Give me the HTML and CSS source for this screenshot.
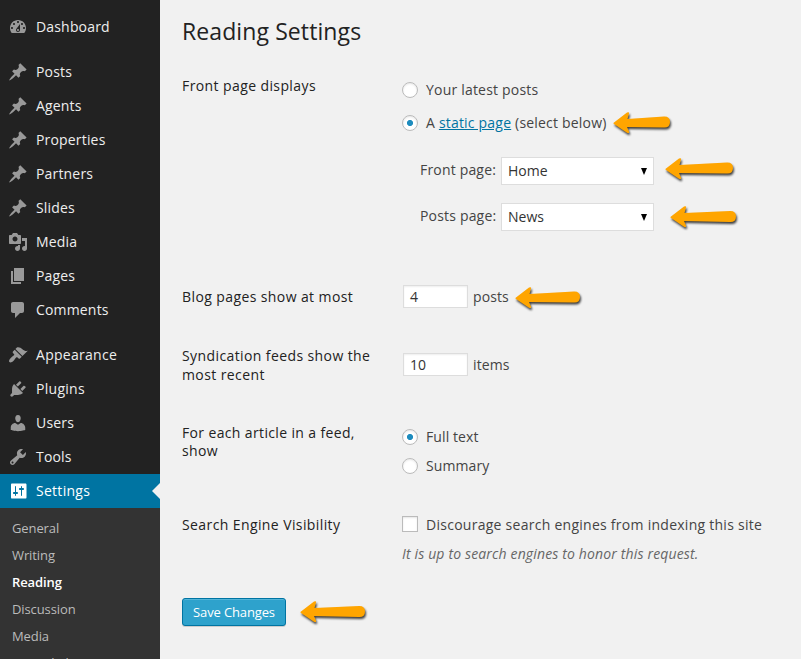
FILE: index.html
```html
<!DOCTYPE html>
<html lang="en">
<head>
<meta charset="utf-8">
<title>Reading Settings</title>
<link rel="stylesheet" href="styles.css">
</head>
<body>
<svg class="defs" width="0" height="0">
  <symbol id="pin" viewBox="0 0 20 20"><path d="M10.44 3.02l1.82-1.82 6.36 6.35-1.83 1.82c-1.05-.68-2.48-.57-3.41.36l-.75.75c-.92.93-1.04 2.35-.35 3.41l-1.83 1.82-2.41-2.41-2.8 2.79c-.42.42-3.38 2.71-3.8 2.29s1.86-3.39 2.28-3.81l2.79-2.79L4.1 9.36l1.83-1.82c1.05.69 2.48.57 3.4-.36l.75-.75c.93-.92 1.05-2.35.36-3.41z"/></symbol>
</svg>
<div class="app">
  <nav class="sidebar">
    <ul class="menu">
      <li class="item"><svg class="icon" viewBox="0 0 20 20"><path fill-rule="evenodd" d="M3.76 16h12.48c1.1-1.37 1.76-3.11 1.76-5 0-4.42-3.58-8-8-8s-8 3.58-8 8c0 1.89.66 3.63 1.76 5zM10 4c.55 0 1 .45 1 1s-.45 1-1 1-1-.45-1-1 .45-1 1-1zM6 6c.55 0 1 .45 1 1s-.45 1-1 1-1-.45-1-1 .45-1 1-1zm8 0c.55 0 1 .45 1 1s-.45 1-1 1-1-.45-1-1 .45-1 1-1zm-5.37 5.55L12 7v6c0 1.1-.9 2-2 2s-2-.9-2-2c0-.57.24-1.08.63-1.45zM4 10c.55 0 1 .45 1 1s-.45 1-1 1-1-.45-1-1 .45-1 1-1zm12 0c.55 0 1 .45 1 1s-.45 1-1 1-1-.45-1-1 .45-1 1-1zm-5 3c0-.55-.45-1-1-1s-1 .45-1 1 .45 1 1 1 1-.45 1-1z"/></svg><span>Dashboard</span></li>
      <li class="separator"></li>
      <li class="item"><svg class="icon"><use href="#pin"/></svg><span>Posts</span></li>
      <li class="item"><svg class="icon"><use href="#pin"/></svg><span>Agents</span></li>
      <li class="item"><svg class="icon"><use href="#pin"/></svg><span>Properties</span></li>
      <li class="item"><svg class="icon"><use href="#pin"/></svg><span>Partners</span></li>
      <li class="item"><svg class="icon"><use href="#pin"/></svg><span>Slides</span></li>
      <li class="item"><svg class="icon" viewBox="0 0 20 20"><path fill-rule="evenodd" d="M13 11V4c0-.55-.45-1-1-1h-1.67L9 1H5L3.67 3H2c-.55 0-1 .45-1 1v7c0 .55.45 1 1 1h10c.55 0 1-.45 1-1zM7 4.5c1.38 0 2.5 1.12 2.5 2.5S8.38 9.5 7 9.5 4.5 8.38 4.5 7 5.62 4.5 7 4.5zM14 6h5v10.5c0 1.38-1.12 2.5-2.5 2.5S14 17.88 14 16.5s1.12-2.5 2.5-2.5c.17 0 .34.02.5.05V9h-3V6zm-4 8.05V13h2v3.5c0 1.38-1.12 2.5-2.5 2.5S7 17.88 7 16.5 8.12 14 9.5 14c.17 0 .34.02.5.05z"/></svg><span>Media</span></li>
      <li class="item"><svg class="icon" viewBox="0 0 20 20"><path d="M6 15V2h10v13H6zm-1 1h8v2H3V5h2v11z"/></svg><span>Pages</span></li>
      <li class="item"><svg class="icon" viewBox="0 0 20 20"><path d="M5 2h9c1.1 0 2 .9 2 2v7c0 1.1-.9 2-2 2h-2l-5 5v-5H5c-1.1 0-2-.9-2-2V4c0-1.1.9-2 2-2z"/></svg><span>Comments</span></li>
      <li class="separator"></li>
      <li class="item"><svg class="icon" viewBox="0 0 20 20"><path d="M14.48 11.06L7.41 3.99l1.5-1.5c.5-.56 2.3-.47 3.51.32 1.21.8 1.43 1.28 2.91 2.1 1.18.64 2.45 1.26 4.45.85zm-.71.71L6.7 4.7 4.93 6.47c-.39.39-.39 1.02 0 1.41l1.06 1.06c.39.39.39 1.03 0 1.42-.6.6-1.43 1.11-2.21 1.69-.35.26-.7.53-1.01.84C1.43 14.23.4 16.08 1.4 17.07c.99 1 2.84-.03 4.18-1.36.31-.31.58-.66.85-1.02.57-.78 1.08-1.61 1.69-2.21.39-.39 1.02-.39 1.41 0l1.06 1.06c.39.39 1.02.39 1.41 0z"/></svg><span class="wide">Appearance</span></li>
      <li class="item"><svg class="icon" viewBox="0 0 20 20"><path d="M13.11 4.36L9.87 7.6 8 5.73l3.24-3.24c.35-.34 1.05-.2 1.56.32.52.51.66 1.21.31 1.55zm-8 1.77l.91-1.12 9.01 9.01-1.19.84c-.71.71-2.63 1.16-3.82 1.16H6.14L4.9 17.26c-.59.59-1.54.59-2.12 0-.59-.58-.59-1.53 0-2.12l1.24-1.24v-3.88c0-1.13.4-3.19 1.09-3.89zm7.26 3.97l3.24-3.24c.34-.35 1.04-.21 1.55.31.52.51.66 1.21.31 1.55l-3.24 3.25z"/></svg><span class="wide">Plugins</span></li>
      <li class="item"><svg class="icon" viewBox="0 0 20 20"><path d="M10 9.25c-2.27 0-2.73-3.44-2.73-3.44C7 4.02 7.82 2 9.97 2c2.16 0 2.98 2.02 2.71 3.81 0 0-.41 3.44-2.68 3.44zm0 2.57L12.72 10c2.39 0 4.52 2.33 4.52 4.53v2.49s-3.65 1.13-7.24 1.13c-3.65 0-7.24-1.13-7.24-1.13v-2.49c0-2.25 1.94-4.48 4.47-4.48z"/></svg><span>Users</span></li>
      <li class="item"><svg class="icon" viewBox="0 0 20 20"><path fill-rule="evenodd" d="M16.68 9.77c-1.34 1.34-3.3 1.67-4.95.99l-5.41 6.52c-.99.99-2.59.99-3.58 0s-.99-2.59 0-3.57l6.52-5.42c-.68-1.65-.35-3.61.99-4.95 1.28-1.28 3.12-1.62 4.72-1.06l-2.89 2.89 2.82 2.82 2.86-2.87c.53 1.58.18 3.39-1.08 4.65zM3.81 16.21c.4.39 1.04.39 1.43 0 .4-.4.4-1.04 0-1.43-.39-.4-1.03-.4-1.43 0-.39.39-.39 1.03 0 1.43z"/></svg><span>Tools</span></li>
      <li class="item current"><svg class="icon" viewBox="0 0 20 20"><path fill-rule="evenodd" d="M18.500 16V4c0-1-.2-1.500-1-1.500H4c-.8 0-1 .5-1 1.500v12c0 1 .2 1.500 1 1.500h13.500c.8 0 1-.5 1-1.500zM8 11h1c.55 0 1 .45 1 1s-.45 1-1 1H8v1.500c0 .28-.22.5-.5.5s-.5-.22-.5-.5V13H6c-.55 0-1-.45-1-1s.45-1 1-1h1V5.500c0-.28.22-.5.5-.5s.5.22.5.5V11zm5-2h-1c-.55 0-1-.45-1-1s.45-1 1-1h1V5.500c0-.28.22-.5.5-.5s.5.22.5.5V7h1c.55 0 1 .45 1 1s-.45 1-1 1h-1v5.500c0 .28-.22.5-.5.5s-.5-.22-.5-.5V9z"/></svg><span class="wide">Settings</span></li>
    </ul>
    <ul class="submenu">
      <li>General</li>
      <li>Writing</li>
      <li class="active">Reading</li>
      <li>Discussion</li>
      <li>Media</li>
      <li>Permalinks</li>
    </ul>
  </nav>
  <main class="content">
    <h1>Reading Settings</h1>
    <section class="row row-front">
      <div class="label">Front page displays</div>
      <div class="field">
        <label class="option"><i class="radio"></i><span>Your latest posts</span></label>
        <label class="option second"><i class="radio on"></i><span>A <a>static page</a> (select below)</span>
          <svg class="arrow a1" width="66" height="30"><path d="M1 10.500L14 .6q2.500-1 2 1L14.500 7 51 4.500q6-.2 6 5.500t-6 5.500L14 15l2 4.500q.5 2.300-2 1.300L1 12q-1-.8 0-1.500z"/></svg></label>
        <div class="pick first"><span>Front page:</span><div class="select"><span>Home</span><b></b></div>
          <svg class="arrow a2" width="77" height="30"><path d="M1 10.500L14 .6q2.500-1 2 1L14.500 7 62 4.500q6-.2 6 5.500t-6 5.500L14 15l2 4.500q.5 2.300-2 1.300L1 12q-1-.8 0-1.500z"/></svg></div>
        <div class="pick"><span>Posts page:</span><div class="select"><span>News</span><b></b></div>
          <svg class="arrow a3" width="75" height="30"><path d="M1 10.500L14 .6q2.500-1 2 1L14.500 7 60 5q6-.2 6 5.500t-6 5.500L14 15l2 4.500q.5 2.300-2 1.300L1 12q-1-.8 0-1.500z"/></svg></div>
      </div>
    </section>
    <section class="row row-blog">
      <div class="label">Blog pages show at most</div>
      <div class="field number"><div class="input">4</div><span>posts</span>
        <svg class="arrow a4" width="74" height="30"><path d="M1 10.500L14 .6q2.500-1 2 1L14.500 7 59 4.500q6-.2 6 5.500t-6 5.500L14 15l2 4.500q.5 2.300-2 1.300L1 12q-1-.8 0-1.500z"/></svg></div>
    </section>
    <section class="row row-feeds">
      <div class="label">Syndication feeds show the<br>most recent</div>
      <div class="field number"><div class="input">10</div><span>items</span></div>
    </section>
    <section class="row row-article">
      <div class="label">For each article in a feed,<br>show</div>
      <div class="field">
        <label class="option"><i class="radio on"></i><span class="tight">Full text</span></label>
        <label class="option"><i class="radio"></i><span class="tight">Summary</span></label>
      </div>
    </section>
    <section class="row row-search">
      <div class="label">Search Engine Visibility</div>
      <div class="field">
        <label class="option"><i class="checkbox"></i><span class="wide">Discourage search engines from indexing this site</span></label>
        <p class="description">It is up to search engines to honor this request.</p>
      </div>
    </section>
    <div class="submit"><button class="save">Save Changes</button>
      <svg class="arrow a5" width="74" height="30"><path d="M1 10.500L14 .6q2.500-1 2 1L14.500 7 59 5q6-.2 6 5.500t-6 5.500L14 15l2 4.500q.5 2.300-2 1.300L1 12q-1-.8 0-1.500z"/></svg></div>
  </main>
</div>
</body>
</html>
```
FILE: styles.css
```css
* { box-sizing: border-box; }
html, body { height: 100%; }
body {
  margin: 0;
  overflow: hidden;
  background: #f1f1f1;
  color: #444;
  font: 14px/18px "Open Sans", sans-serif;
}
ul { margin: 0; padding: 0; list-style: none; }
.defs { display: block; }
.app { display: flex; height: 659px; overflow: hidden; }

.sidebar { flex: none; width: 160px; background: #222; overflow: hidden; }
.menu { padding-top: 10px; }
.item {
  display: flex;
  align-items: center;
  height: 34px;
  padding-left: 8px;
  color: #eee;
  letter-spacing: .17px;
}
.item span { margin-left: 8px; }
.item .wide { letter-spacing: .28px; }
.icon { width: 20px; height: 20px; fill: #999; flex: none; }
.separator { height: 11px; }
.current { position: relative; background: #0074a2; color: #fff; }
.current .icon { fill: #fff; }
.current::after {
  content: "";
  position: absolute;
  right: 0;
  top: 9px;
  border: 8px solid transparent;
  border-left: 0;
  border-right-color: #f1f1f1;
}
.submenu { padding-top: 7px; background: #333; font-size: 13px; letter-spacing: -.1px; }
.submenu li { height: 27px; padding-left: 12px; line-height: 27px; color: #bbb; }
.submenu .active { color: #fff; font-weight: 600; }

.content { flex: 1; min-width: 0; padding-left: 22px; }
h1 {
  height: 77px;
  margin: 0;
  padding-top: 16px;
  font-size: 23px;
  line-height: 30px;
  font-weight: 400;
  letter-spacing: .1px;
  color: #222;
}
.row { display: grid; grid-template-columns: 220px 1fr; }
.row-front { height: 211px; }
.row-blog { height: 59px; }
.row-feeds { height: 77px; }
.row-article { height: 92px; }
.row-search { height: 82px; }
.label { color: #222; line-height: 18.5px; letter-spacing: .4px; white-space: nowrap; }
.row-article .label { line-height: 18px; letter-spacing: .36px; }
.row-front .field, .row-article .field { padding-top: 4px; }
.option {
  display: flex;
  align-items: center;
  gap: 8px;
  height: 18px;
  position: relative;
  white-space: nowrap;
  letter-spacing: .2px;
}
.option .tight { letter-spacing: .1px; }
.option .wide { letter-spacing: .265px; }
.option.second { margin-top: 15px; }
.row-article .option + .option { margin-top: 11px; }
.radio, .checkbox {
  width: 16px;
  height: 16px;
  flex: none;
  border: 1px solid #bbb;
  background: #fff;
  box-shadow: inset 0 1px 2px rgba(0, 0, 0, .1);
}
.checkbox { margin-top: -2px; }
.radio { border-radius: 50%; }
.radio.on { background: radial-gradient(circle at center, #1e8cbe 2.7px, #fff 3.4px); }
a { color: #0074a2; text-decoration: underline; }
.pick { display: flex; align-items: center; width: 252px; height: 28px; margin-top: 18px; padding-left: 18px; position: relative; }
.pick > span { width: 81px; margin-top: -2px; letter-spacing: .18px; white-space: nowrap; }
.pick.first { margin-top: 25px; }
.select {
  display: flex;
  align-items: center;
  justify-content: space-between;
  width: 153px;
  height: 28px;
  padding: 0 6px;
  border: 1px solid #ddd;
  background: #fff;
  color: #333;
}
.select b { border: 3.5px solid transparent; border-top: 7px solid #000; border-bottom: 0; }
.number { display: flex; align-items: center; height: 23px; padding-left: 1px; gap: 5px; position: relative; letter-spacing: .1px; }
.row-blog .number { margin-top: -3px; }
.row-feeds .number { margin-top: 6px; }
.input {
  width: 65px;
  height: 23px;
  padding-left: 6px;
  border: 1px solid #ddd;
  background: #fff;
  box-shadow: inset 0 1px 2px rgba(0, 0, 0, .07);
  color: #333;
  line-height: 22px;
}
.description { margin: 11px 0 0; color: #666; font-style: italic; letter-spacing: .15px; }
.submit { position: relative; height: 28px; }
.save {
  display: block;
  width: 104px;
  height: 28px;
  padding: 0;
  border: 1px solid #0074a2;
  border-radius: 3px;
  background: #2ea2cc;
  box-shadow: inset 0 1px 0 rgba(120, 200, 230, .5), 0 1px 0 rgba(0, 0, 0, .15);
  color: #fff;
  font: 13px/26px "Open Sans", sans-serif;
  letter-spacing: -.14px;
}
.arrow { position: absolute; overflow: visible; fill: #ffa500; filter: drop-shadow(1.5px 2px 1.2px rgba(0, 0, 0, .75)); }
.a1 { left: 211px; top: -2px; }
.a2 { left: 263px; top: 1px; }
.a3 { left: 268px; top: 3px; }
.a4 { left: 113px; top: 2px; }
.a5 { left: 118px; top: 3px; }
```
